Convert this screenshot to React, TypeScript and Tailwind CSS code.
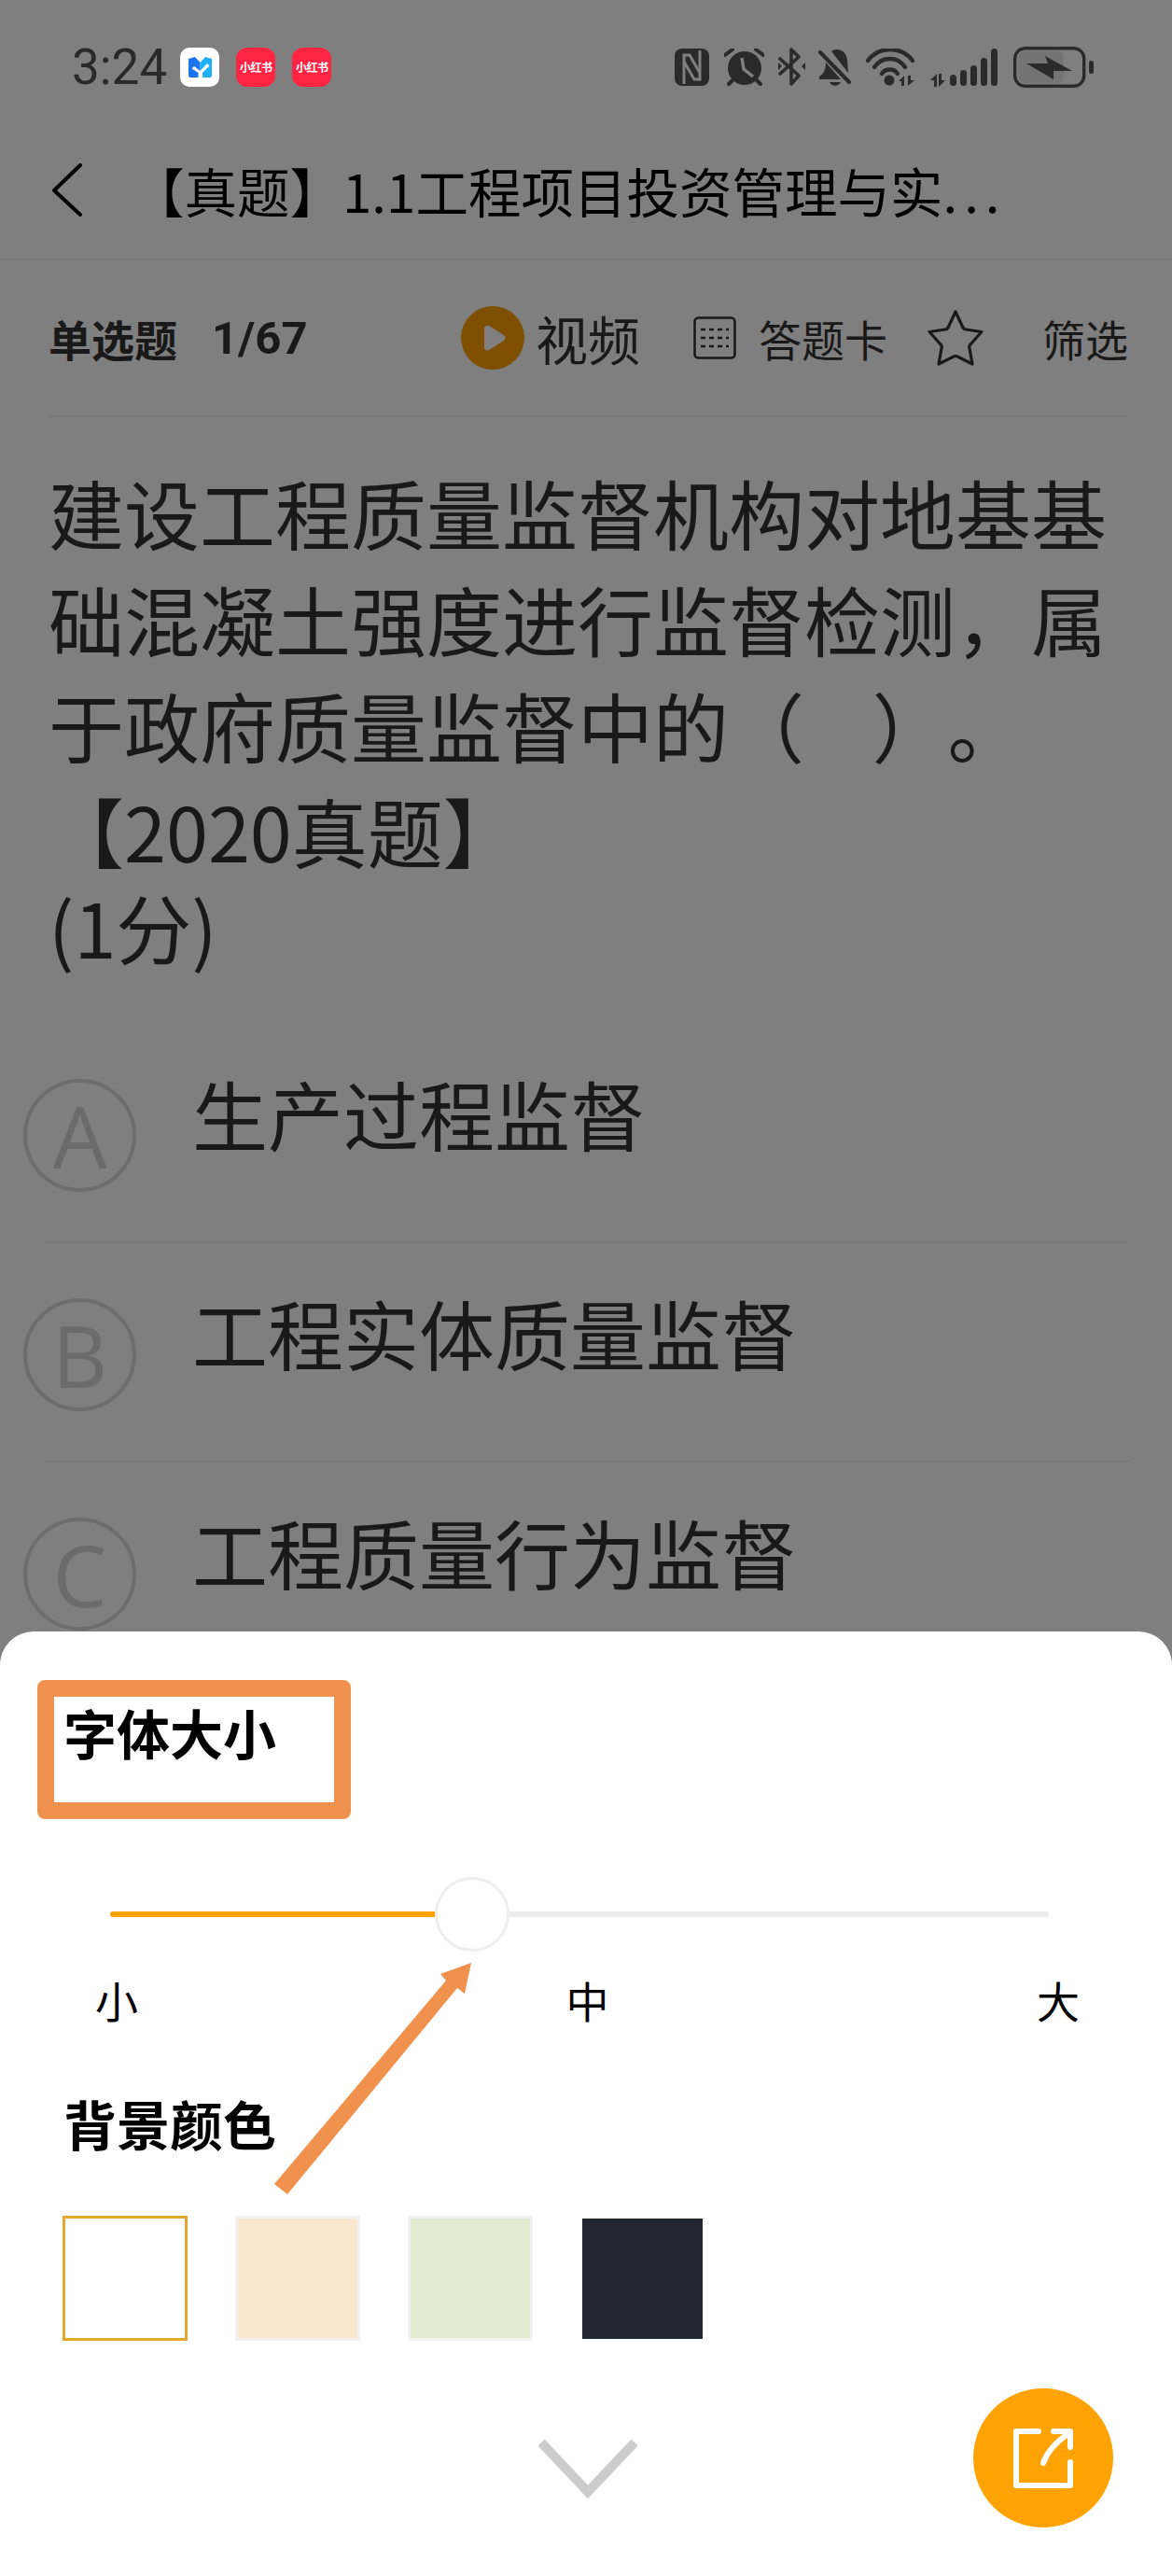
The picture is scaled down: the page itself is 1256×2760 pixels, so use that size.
import React from "react";

const CJK = { fontFamily: '"Noto Sans CJK SC", "Noto Sans", sans-serif' };

function RedNoteBadge() {
  return (
    <div className="w-[42px] h-[42px] rounded-[12px] bg-[#ff2442] flex items-center justify-center text-white text-[12px] leading-none font-bold whitespace-nowrap tracking-[-0.6px]">
      小红书
    </div>
  );
}

function MailBadge() {
  return (
    <div className="w-[42px] h-[42px] rounded-[10px] bg-white flex items-center justify-center">
      <svg width="25" height="22" viewBox="0 0 25 22">
        <path d="M0 2 L7 0 L12.5 6 L12.5 22 L2 22 C1 22 0 21 0 20 Z" fill="#1c74ee" />
        <path d="M25 2 L18 0 L12.5 6 L12.5 22 L23 22 C24 22 25 21 25 20 Z" fill="#1fb0fb" />
        <path d="M6 10 L12.5 15 L20 7 L22.5 9.5 L15 17 L15 22 L10.5 22 L10.5 17 L3.5 12.5 Z" fill="#ffffff" />
      </svg>
    </div>
  );
}

function StatusIcons() {
  const c = "#555555";
  return (
    <div className="flex items-center">
      {/* NFC */}
      <svg width="37" height="40" viewBox="0 0 37 40">
        <rect x="0" y="0" width="37" height="40" rx="8" fill={c} />
        <path d="M10 38 V7 H16 L27 26" stroke="#fff" strokeWidth="3" fill="none" />
        <path d="M27 2 V33 H21 L10 14" stroke="#fff" strokeWidth="3" fill="none" />
      </svg>
      {/* alarm */}
      <svg width="43" height="40" viewBox="0 0 43 40" className="ml-[16px]">
        <circle cx="22" cy="21" r="18" fill={c} />
        <path d="M1 7 L9 1 M34 1 L42 7 M5 38 L10 33 M39 38 L34 33" stroke={c} strokeWidth="4" strokeLinecap="round" />
        <path d="M19 10 L21 22 L31 30" stroke="#fff" strokeWidth="3.5" fill="none" />
      </svg>
      {/* bluetooth */}
      <svg width="29" height="42" viewBox="0 0 29 42" className="ml-[15px]">
        <path d="M2 12 L22 30 L14 39 V2 L22 10 L2 28" stroke={c} strokeWidth="3.6" fill="none" strokeLinejoin="round" strokeLinecap="round" />
        <path d="M0 16 L4 20 L0 24 Z M29 16 L25 20 L29 24 Z" fill={c} />
      </svg>
      {/* muted bell */}
      <svg width="35" height="40" viewBox="0 0 35 40" className="ml-[14px]">
        <path d="M14 3 C20 -1 29 1 31 12 L32 26 Z" fill={c} />
        <path d="M8 15 C8 22 6 27 1 30 V33 H24 Z" fill={c} />
        <path d="M12 36 H24 C22 41 14 41 12 36 Z" fill={c} />
        <path d="M2 4 L33 36" stroke={c} strokeWidth="4" strokeLinecap="round" />
      </svg>
      {/* wifi with transfer arrows */}
      <svg width="52" height="41" viewBox="0 0 52 41" className="ml-[16px]">
        <path d="M2 13 C14 -3 38 -3 50 13" stroke={c} strokeWidth="4.4" fill="none" strokeLinecap="round" />
        <path d="M9 20 C17 8 34 8 42 20" stroke={c} strokeWidth="4.4" fill="none" strokeLinecap="round" />
        <path d="M17 27 C21 21 30 21 34 27" stroke={c} strokeWidth="4.4" fill="none" strokeLinecap="round" />
        <circle cx="25" cy="34" r="5.5" fill={c} />
        <path d="M41 29 V40 H38 V35 H35 Z M45 40 V29 H48 V34 H52 Z" fill={c} />
      </svg>
      {/* cellular bars */}
      <svg width="73" height="41" viewBox="0 0 73 41" className="ml-[16px]">
        <path d="M8 27 V41 H5 V34 H1 Z M10 41 V27 H13 V34 H17 Z" fill={c} />
        <rect x="22" y="28" width="7" height="12" rx="3.5" fill={c} />
        <rect x="33" y="23" width="7" height="17" rx="3.5" fill={c} />
        <rect x="44" y="18" width="7" height="22" rx="3.5" fill={c} />
        <rect x="55" y="10" width="7" height="30" rx="3.5" fill={c} />
        <rect x="66" y="0" width="7" height="40" rx="3.5" fill={c} />
      </svg>
      {/* battery charging */}
      <svg width="86" height="44" viewBox="0 0 86 44" className="ml-[17px]">
        <rect x="5" y="5" width="49" height="34" rx="7" fill="#e6e6e6" />
        <rect x="1.7" y="1.7" width="74" height="40.6" rx="11" fill="none" stroke={c} strokeWidth="3.4" />
        <path d="M14 18 L37 18 L34 10 L63 26 L43 26 L43 35 Z" fill={c} />
        <rect x="81" y="15" width="5" height="14" rx="2.5" fill={c} />
      </svg>
    </div>
  );
}

function PlayBadge() {
  return (
    <svg width="68" height="68" viewBox="0 0 68 68" className="shrink-0">
      <circle cx="34" cy="34" r="34" fill="#ff9f00" />
      <path d="M25 24 C25 21 28 20 30 21 L46 31 C48 33 48 35 46 37 L30 47 C28 48 25 47 25 44 Z" fill="#ffffff" />
    </svg>
  );
}

function AnswerCardIcon() {
  return (
    <svg width="46" height="46" viewBox="0 0 46 46" fill="none" stroke="#333" strokeWidth="2.6" className="shrink-0">
      <rect x="1.5" y="1.5" width="43" height="43" rx="4" />
      <path d="M8 14 H38 M8 23 H38 M8 32 H38" strokeDasharray="5 4" />
    </svg>
  );
}

function StarIcon() {
  return (
    <svg width="62" height="62" viewBox="0 0 62 62" fill="none" stroke="#333" strokeWidth="3.2" strokeLinejoin="round" className="shrink-0">
      <path d="M31 3 L39 20 C40 21.5 41 22 42 22 L59 24.5 L47 38 C46 39 45.5 40.5 46 42 L49 59 L33 51 C32 50.5 30 50.5 29 51 L13 59 L16 42 C16.5 40.5 16 39 15 38 L3 24.5 L20 22 C21 22 22 21.5 23 20 Z" />
    </svg>
  );
}

function OptionRow({ letter, text, last }: { letter: string; text: string; last?: boolean }) {
  return (
    <div className="flex flex-col h-[235px] pl-[25px]">
      <div className="flex items-start flex-1 min-h-0">
        <div
          className="w-[121px] h-[121px] shrink-0 rounded-full border-[4px] border-[#dadada] flex items-center justify-center mt-[59px] text-[#d6d6d6] text-[92px] leading-none"
          style={{ fontFamily: '"Open Sans", sans-serif' }}
        >
          {letter}
        </div>
        <div className="ml-[60px] mt-[47px] text-[81px] leading-[96px] text-[#333] whitespace-nowrap">{text}</div>
      </div>
      {last ? null : <div className="ml-[23px] mr-[46px] h-[2px] bg-[#f3f3f3]" />}
    </div>
  );
}

function Swatch({ cls }: { cls: string }) {
  return <div className={`w-[134px] h-[134px] ${cls}`} />;
}

export default function App() {
  return (
    <div className="relative w-[1256px] h-[2760px] overflow-hidden bg-white text-black" style={CJK}>
      {/* Status bar: the app badges stay bright over the dim layer */}
      <div className="flex items-center justify-between h-[144px] pl-[77px] pr-[84px]">
        <div className="flex items-center">
          <span className="text-[53px] leading-none text-[#555]" style={{ fontFamily: '"Roboto", sans-serif' }}>3:24</span>
          <div className="relative z-10 flex items-center gap-[18px] ml-[14px]">
            <MailBadge />
            <RedNoteBadge />
            <RedNoteBadge />
          </div>
        </div>
        <StatusIcons />
      </div>

      <div className="flex items-center h-[135px] pb-[14px] pl-[55px] border-b-2 border-[#f2f2f2]">
        <svg width="33" height="57" viewBox="0 0 33 57" fill="none" stroke="#000" strokeWidth="4" strokeLinecap="round" strokeLinejoin="round" className="shrink-0">
          <path d="M31 2 L3 29 L31 55" />
        </svg>
        <div className="ml-[53px] text-[56.5px] leading-none whitespace-nowrap">
          【真题】1.1工程项目投资管理与实<span className="tracking-[7px]">...</span>
        </div>
      </div>

      <div className="ml-[52px] mr-[48px] h-[168px] border-b-2 border-[#f0f0f0] flex items-center text-[46px] leading-none text-[#333] whitespace-nowrap">
        <div className="font-bold w-[175px] shrink-0">单选题</div>
        <div className="font-bold w-[267px] shrink-0 text-[49px]" style={{ fontFamily: '"Roboto", sans-serif' }}>1/67</div>
        <PlayBadge />
        <div className="ml-[12px] text-[56px]">视频</div>
        <div className="ml-[57px]"><AnswerCardIcon /></div>
        <div className="ml-[24px]">答题卡</div>
        <div className="ml-[42px]"><StarIcon /></div>
        <div className="ml-[62px]">筛选</div>
      </div>

      <div className="h-[650px] pl-[52px] pt-[44px] text-[81px] leading-[114px] text-[#333] whitespace-nowrap [text-spacing-trim:space-all]">
        <div>建设工程质量监督机构对地基基</div>
        <div>础混凝土强度进行监督检测，属</div>
        <div>于政府质量监督中的（&nbsp;&nbsp;&nbsp;&nbsp;）。</div>
        <div className="leading-[112px]">【2020真题】</div>
        <div className="leading-[94px]">(1分)</div>
      </div>

      <OptionRow letter="A" text="生产过程监督" />
      <OptionRow letter="B" text="工程实体质量监督" />
      <OptionRow letter="C" text="工程质量行为监督" last />

      {/* Dim layer */}
      <div className="absolute inset-0 bg-black/50" />

      {/* Settings sheet */}
      <div className="absolute left-0 right-0 top-[1748px] bottom-0 z-20 bg-white rounded-t-[36px]">
        <div className="ml-[40px] mt-[52px] w-[336px] h-[149px] border-[18px] border-[#f0924d] rounded-[8px]">
          <div className="ml-[10px] mt-[5px] text-[57px] leading-[64px] font-bold whitespace-nowrap">字体大小</div>
        </div>

        <div className="relative ml-[118px] mr-[132px] mt-[99px] h-[6px] rounded-full bg-[#ececec]">
          <div className="h-full w-[350px] rounded-full bg-[#ffa305]" />
          <div className="absolute left-[348px] -top-[37px] w-[80px] h-[80px] rounded-full bg-white border-[3px] border-[#eeeeee]" />
        </div>

        <div className="flex justify-between pl-[102px] pr-[99px] mt-[61px] text-[46px] leading-[54px]">
          <span>小</span>
          <span>中</span>
          <span>大</span>
        </div>

        <div className="ml-[68px] mt-[73px] text-[57px] leading-[64px] font-bold">背景颜色</div>

        <div className="flex items-center ml-[67px] mt-[68px]">
          <Swatch cls="border-[3px] border-[#e5a82f] bg-white" />
          <div className="ml-[51px]"><Swatch cls="border-[3px] border-[#f1f1f1] bg-[#fbe6d0]" /></div>
          <div className="ml-[51px]"><Swatch cls="border-[3px] border-[#f1f1f1] bg-[#e3e9cf]" /></div>
          <div className="ml-[53px]"><div className="w-[129px] h-[129px] bg-[#202730]" /></div>
        </div>

        <div className="flex justify-center mt-[106px] pl-[4px]">
          <svg width="106" height="64" viewBox="0 0 106 64">
            <path d="M3 3 L53 56 L103 3" fill="none" stroke="#cccccc" strokeWidth="10" />
          </svg>
        </div>

        {/* Share button */}
        <div className="absolute left-[1043px] top-[811px] w-[150px] h-[149px] rounded-full bg-[#ffa305] flex items-center justify-center">
          <svg width="64" height="64" viewBox="0 0 64 64" fill="none" stroke="#ffffff" strokeWidth="6" strokeLinecap="round" strokeLinejoin="round">
            <path d="M27 3 H3 V61 H61 V36" />
            <path d="M61 20 V3 H43" />
            <path d="M32 37 C36 25 44 16 58 6" />
          </svg>
        </div>
      </div>

      {/* Callout arrow */}
      <svg className="absolute left-0 top-0 z-30 pointer-events-none" width="1256" height="2760" viewBox="0 0 1256 2760">
        <path d="M505 2103 L472 2115 L478 2122 L294 2340 L308 2351 L490 2130 L498 2136 Z" fill="#f0924d" />
      </svg>
    </div>
  );
}
